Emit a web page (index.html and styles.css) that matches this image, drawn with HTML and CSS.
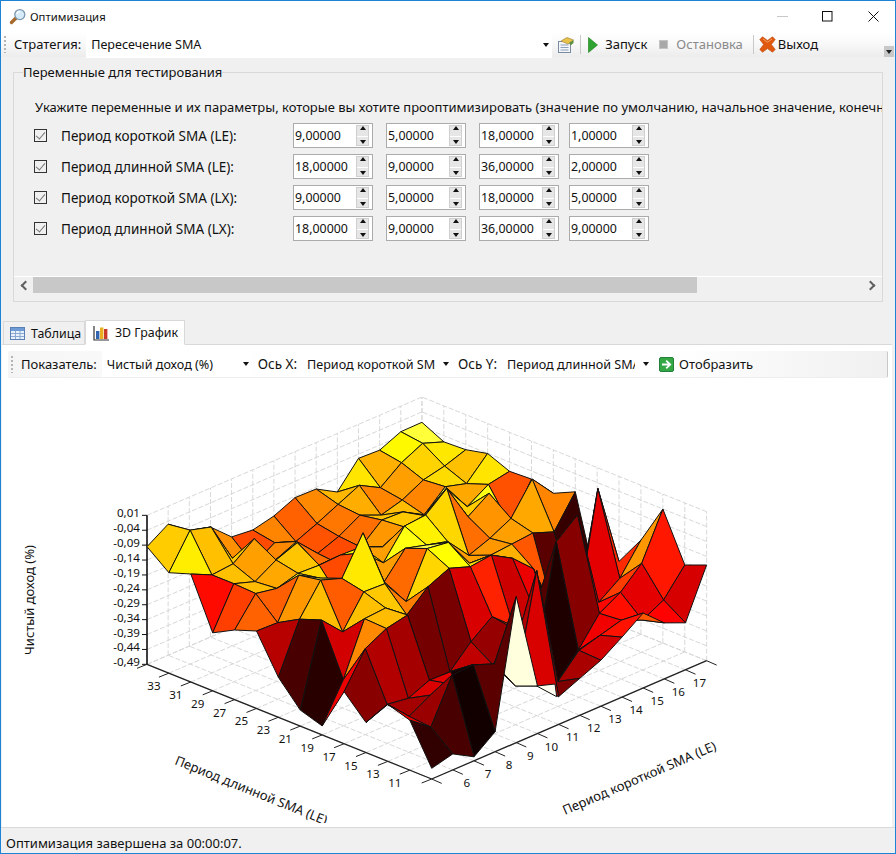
FILE: index.html
```html
<!DOCTYPE html>
<html>
<head>
	<meta charset="utf-8">
	<title>Оптимизация</title>
	<link rel="stylesheet" href="styles.css">
</head>
<body>
<div class="window">
	<div class="titlebar">
		<svg class="app-icon" width="18" height="18" viewBox="0 0 18 18">
			<path d="M7 10 L2.5 14.5" stroke="#a8692c" stroke-width="3.4" stroke-linecap="round"/>
			<circle cx="10.8" cy="6.6" r="5" fill="#d7ecfa" stroke="#7d97ad" stroke-width="1.3"/>
			<path d="M8 6 a3 3 0 0 1 3-2.6" fill="none" stroke="#fff" stroke-width="1.4"/>
		</svg>
		<span class="title">Оптимизация</span>
		<div class="caption-btns">
			<svg width="138" height="30" viewBox="0 0 138 30">
				<path d="M20 14.5h11" stroke="#c8c8c8"/>
				<rect x="65.5" y="9.5" width="9.5" height="9.5" fill="none" stroke="#111"/>
				<path d="M111.5 9.5l10 10M121.5 9.5l-10 10" stroke="#111"/>
			</svg>
		</div>
	</div>

	<div class="toolbar main-bar">
		<span class="grip"></span>
		<span class="tb-label">Стратегия:</span>
		<span class="combo combo-wide"><span class="combo-text">Пересечение SMA</span><i class="drop"></i></span>
		<svg class="tb-icon note-icon" width="18" height="18" viewBox="0 0 18 18">
			<rect x="1.5" y="5.5" width="12" height="11" fill="#f4f6f9" stroke="#7a8ca3"/>
			<path d="M3.5 9h8M3.5 11.5h8M3.5 14h8" stroke="#8ca0b8"/>
			<path d="M4 5 L10 1.5 L16.5 4 L11 8z" fill="#e9c24a" stroke="#a9873a" stroke-width=".7"/>
			<path d="M12 7l4.5-3v3l-3 2.5z" fill="#5d8f3c"/>
		</svg>
		<span class="tb-sep"></span>
		<svg class="tb-icon play-icon" width="12" height="18" viewBox="0 0 12 18">
			<path d="M1.5 1.5 L10.5 9 L1.5 16.5z" fill="#2fa32f" stroke="#1c7a1c" stroke-width=".6"/>
		</svg>
		<span class="tb-label run">Запуск</span>
		<span class="stop-icon"></span>
		<span class="tb-label stop">Остановка</span>
		<span class="tb-sep sep-exit"></span>
		<svg class="tb-icon" width="17" height="17" viewBox="0 0 17 17">
			<path d="M3.5 .8 L8.5 4.4 L13.5 .8 L16.2 3.5 L12.4 8.5 L16.2 13.5 L13.5 16.2 L8.5 12.6 L3.5 16.2 L.8 13.5 L4.6 8.5 L.8 3.5z" fill="#e0590f" stroke="#b8480c" stroke-width=".6"/>
			<path d="M4 3 L8.5 6.2 L13 3" fill="none" stroke="#f6a161"/>
		</svg>
		<span class="tb-label exit">Выход</span>
		<span class="overflow"><i></i></span>
	</div>

	<fieldset class="group">
		<legend>Переменные для тестирования</legend>
		<div class="scroll-view">
			<p class="intro">Укажите переменные и их параметры, которые вы хотите прооптимизировать (значение по умолчанию, начальное значение, конечное значение, шаг).</p>
			<div class="var-row">
				<span class="check"></span>
				<span class="var-name">Период короткой SMA (LE):</span>
				<span class="spin"><b>9,00000</b><i></i></span>
				<span class="spin"><b>5,00000</b><i></i></span>
				<span class="spin"><b>18,00000</b><i></i></span>
				<span class="spin last"><b>1,00000</b><i></i></span>
			</div>
			<div class="var-row">
				<span class="check"></span>
				<span class="var-name">Период длинной SMA (LE):</span>
				<span class="spin"><b>18,00000</b><i></i></span>
				<span class="spin"><b>9,00000</b><i></i></span>
				<span class="spin"><b>36,00000</b><i></i></span>
				<span class="spin last"><b>2,00000</b><i></i></span>
			</div>
			<div class="var-row">
				<span class="check"></span>
				<span class="var-name">Период короткой SMA (LX):</span>
				<span class="spin"><b>9,00000</b><i></i></span>
				<span class="spin"><b>5,00000</b><i></i></span>
				<span class="spin"><b>18,00000</b><i></i></span>
				<span class="spin last"><b>5,00000</b><i></i></span>
			</div>
			<div class="var-row">
				<span class="check"></span>
				<span class="var-name">Период длинной SMA (LX):</span>
				<span class="spin"><b>18,00000</b><i></i></span>
				<span class="spin"><b>9,00000</b><i></i></span>
				<span class="spin"><b>36,00000</b><i></i></span>
				<span class="spin last"><b>9,00000</b><i></i></span>
			</div>
		</div>
		<div class="hscroll">
			<span class="arrow left"></span>
			<span class="thumb"></span>
			<span class="arrow right"></span>
		</div>
	</fieldset>

	<div class="tabs">
		<span class="tab">
			<svg width="15" height="13" viewBox="0 0 15 13">
				<rect x=".5" y=".5" width="14" height="12" fill="#e8f0fa" stroke="#5a80b5"/>
				<rect x="1" y="1" width="13" height="3" fill="#6f9bd4"/>
				<path d="M1 6.5h13M1 9.5h13M5.5 4v8M10 4v8" stroke="#8aa8d0"/>
			</svg>
			Таблица
		</span>
		<span class="tab active">
			<svg width="17" height="16" viewBox="0 0 17 16">
				<path d="M1 1v14h15" fill="none" stroke="#333" stroke-width="1.2"/>
				<rect x="3" y="6" width="3.4" height="8" fill="#3465b0"/>
				<rect x="7" y="2.5" width="3.4" height="11.5" fill="#e8b020"/>
				<rect x="11" y="4" width="3.4" height="10" fill="#c9392a"/>
			</svg>
			3D График
		</span>
	</div>

	<div class="panel">
		<div class="toolbar chart-bar">
			<span class="grip"></span>
			<span class="tb-label">Показатель:</span>
			<span class="combo"><span class="combo-text">Чистый доход (%)</span><i class="drop"></i></span>
			<span class="tb-label axis-label">Ось X:</span>
			<span class="combo"><span class="combo-text">Период короткой SMA (LE)</span><i class="drop"></i></span>
			<span class="tb-label axis-label">Ось Y:</span>
			<span class="combo"><span class="combo-text">Период длинной SMA (LE)</span><i class="drop"></i></span>
			<svg class="go-icon" width="15" height="15" viewBox="0 0 15 15">
				<rect x=".5" y=".5" width="14" height="14" rx="1.5" fill="#35a845" stroke="#23803a"/>
				<path d="M3 7.5h7M7.2 3.6l4 3.9-4 3.9" fill="none" stroke="#fff" stroke-width="1.8"/>
			</svg>
			<span class="tb-label">Отобразить</span>
		</div>
		<svg id="chart" class="chart" width="891" height="445" viewBox="2 378 891 445"></svg>
	</div>

	<div class="statusbar">Оптимизация завершена за 00:00:07.</div>
</div>
<script src="chart.js"></script>
</body>
</html>
```

FILE: styles.css
```css
* { box-sizing: border-box; }
html, body { margin: 0; padding: 0; }
body { font-family: "Noto Sans", "Open Sans", sans-serif; font-size: 13px; color: #111; background: #f0f0f0; }

.window { width: 896px; height: 854px; border: 1px solid #1b84d6; display: flex; flex-direction: column; background: #f0f0f0; overflow: hidden; }

.titlebar { height: 31px; background: #fff; display: flex; align-items: center; padding-left: 8px; flex: none; }
.app-icon { margin-right: 3px; }
.title { font-size: 11.3px; }
.caption-btns { margin-left: auto; height: 30px; }
.caption-btns svg { display: block; }

.toolbar { display: flex; align-items: center; flex: none; }
.main-bar { height: 25px; padding-left: 3px; background: linear-gradient(#fff, #fafafa 40%, #ececec); position: relative; }
.main-bar .tb-label { padding-bottom: 2px; }
.grip { width: 2px; height: 17px; margin-right: 8px; background: repeating-linear-gradient(#b4b4b4 0 2px, transparent 2px 4px); flex: none; }
.tb-label { white-space: nowrap; }
.axis-label { font-size: 13.5px; }
.combo { width: 150px; height: 26px; background: #fff; display: flex; align-items: center; padding-left: 5px; margin: 0 6px 0 5px; font-size: 12.6px; flex: none; position: relative; overflow: hidden; }
.combo-wide { width: 466px; margin-right: 5px; }
.combo-text { white-space: nowrap; overflow: hidden; width: 128px; }
.combo-wide .combo-text { width: 300px; }
.drop { position: absolute; right: 3px; top: 11px; border: 3px solid transparent; border-top: 4px solid #111; border-bottom: 0; }
.tb-icon { flex: none; }
.tb-sep { width: 1px; height: 19px; background: #c9c9c9; margin: 0 6px 0 5px; flex: none; }
.play-icon { margin-right: 6px; }
.stop-icon { width: 9px; height: 9px; background: #a9a9a9; border: 1px solid #c4c4c4; margin: 0 8px 0 12px; flex: none; }
.stop { color: #8a8a8a; }
.sep-exit { margin: 0 5px 0 10px; }
.exit { margin-left: 2px; }
.overflow { position: absolute; right: 1px; bottom: 0; width: 10px; height: 11px; background: #c8c8c8; }
.overflow i { position: absolute; left: 2px; top: 4px; border: 3px solid transparent; border-top: 4px solid #222; border-bottom: 0; }

.group { margin: 6px 12px 0 12px; padding: 0; border: 1px solid #d9d9d9; height: 239px; position: relative; flex: none; min-width: 0; }
.group legend { font-size: 13px; margin-left: 9px; padding: 0; line-height: 18px; }
.scroll-view { height: 195px; overflow: hidden; padding: 16px 0 0 20px; }
.intro { margin: 0 0 3px 1px; font-size: 13px; line-height: 20px; white-space: nowrap; }
.var-row { height: 31px; display: flex; align-items: center; }
.check { width: 13px; height: 13px; border: 1px solid #333; position: relative; margin-right: 14px; flex: none; }
.check:after { content: ""; position: absolute; left: 3px; top: 0; width: 4px; height: 8px; border: solid #777; border-width: 0 1.5px 1.5px 0; transform: rotate(40deg); }
.var-name { width: 232px; font-size: 13.5px; flex: none; white-space: nowrap; }
.spin { width: 80px; height: 25px; margin-right: 13px; background: #fff; border: 1px solid #ababab; padding-left: 1px; display: flex; align-items: center; justify-content: space-between; flex: none; position: relative; }
.spin.last { margin-right: 0; }
.spin:nth-child(5) { margin-right: 10px; }
.spin b { font-weight: normal; font-size: 12.4px; }
.spin i { position: absolute; right: 3px; top: 1px; width: 13px; height: 21px; background: linear-gradient(#e6e6e6 0 10px, #fff 10px 11px, #e6e6e6 11px); border: 1px solid #cfcfcf; }
.spin i:before, .spin i:after { content: ""; position: absolute; left: 3px; border: 3px solid transparent; }
.spin i:before { top: 0; border-bottom: 4px solid #111; border-top: 0; }
.spin i:after { bottom: 1px; border-top: 4px solid #111; border-bottom: 0; }

.hscroll { height: 17px; display: flex; align-items: center; border-top: 1px solid #fff; }
.thumb { width: 664px; height: 16px; background: #c8c8c8; }
.arrow { width: 19px; height: 16px; position: relative; flex: none; }
.arrow:after { content: ""; position: absolute; top: 5px; width: 5px; height: 5px; border: solid #606060; border-width: 2px 0 0 2px; }
.arrow.left:after { left: 8px; transform: rotate(-45deg); }
.arrow.right { margin-left: auto; }
.arrow.right:after { right: 8px; transform: rotate(135deg); }

.tabs { height: 25px; margin-top: 17px; padding-left: 2px; display: flex; align-items: flex-end; flex: none; position: relative; z-index: 1; }
.tab { height: 23px; width: 82px; background: #f0f0f0; border: 1px solid #d9d9d9; border-bottom: 0; display: flex; align-items: center; gap: 6px; padding-left: 6px; font-size: 12.4px; white-space: nowrap; }
.tab.active { height: 25px; width: 100px; background: #fff; border-bottom: 1px solid #fff; margin-bottom: -1px; gap: 5px; padding-left: 7px; }

.panel { flex: none; height: 483px; margin: 0 3px 0 1px; background: #fff; border-top: 1px solid #d9d9d9; }
.chart-bar { height: 27px; margin: 6px 4px 0 6px; padding-left: 3px; background: linear-gradient(90deg, #f5f5f5, #fff 30%, #fff 75%, #f0f0f0); border-right: 1px solid #c8c8c8; border-bottom: 1px solid #eee; border-radius: 2px; }
.go-icon { margin: 0 5px 0 1px; flex: none; }
.chart { display: block; }
.chart text { font-family: "Noto Sans", "Open Sans", sans-serif; font-size: 11.6px; fill: #111; }
.chart text.axis-title { font-size: 13px; }

.statusbar { height: 26px; flex: none; border-top: 1px solid #d9d9d9; padding: 5px 0 0 5px; font-size: 13px; line-height: 20px; }
```

FILE: chart.js
```js
// height above the floor (px) of every grid vertex, [long index][short index]
var H = [
	[10.7,16,4,20,146,47.5,27.7,37,46,60,75,56,47,95.7],
	[50,34,77,78,70,38.7,145,25,47,53,59,50,61,86.9],
	[57,36,48,50,5,51,60,40,6.9,29.5,57,69,88.9,134],
	[30,39,36,45,44.4,42,33,60,18,129,146.5,50,65,94.2],
	[52,86,97,101.4,25.6,26.5,47.4,63.3,45,52,12,25,146,64],
	[9,46,98,99.6,83.5,102.7,112,104.5,107,94.7,75,20,12,30],
	[16,97,76,107,106,79,123,120,90,89,91,93,85,116],
	[40,89,119,111.6,148,90,114.4,108.6,103,80,88,98.8,129,105.7],
	[77.4,76.6,115,103,72,110,91,118.7,120.6,138,100.7,115,73.6,111],
	[69.6,97,93,99,98,99,98,89,100,102,120,92.8,106,110],
	[58,98,91,103.5,111.7,80,72,80,98,97,85,104,98,119],
	[108,98,100,116,85.6,95,74,82,94,85,91,102,106.8,114],
	[100.5,134,128,87.6,72,85,77,86,96,106,94.5,110.4,120.7,113],
	[117.6,131,115.4,110,91,88.8,93.7,103,102.5,90.4,115,114,123.4,123.7]
];
var ZMAX = 149, N = 13;
var svg = document.getElementById('chart');

function P(i, j, h) {
	return [431.7 + 21.15 * j - 21.9 * i, 779 - 9.1 * j - 8.82 * i - (h || 0)];
}
function add(tag, attrs, txt) {
	var e = document.createElementNS('http://www.w3.org/2000/svg', tag);
	for (var k in attrs) e.setAttribute(k, attrs[k]);
	if (txt) e.textContent = txt;
	svg.appendChild(e);
	return e;
}
function line(a, b, cls, w) {
	add('line', { x1: a[0], y1: a[1], x2: b[0], y2: b[1], stroke: cls, 'stroke-width': w || 1 });
}
function dash(a, b) {
	add('line', { x1: a[0], y1: a[1], x2: b[0], y2: b[1], stroke: '#d8d8d8', 'stroke-dasharray': '5 2' });
}
function hot(h) {
	var v = Math.min(1, h / ZMAX);
	var r = Math.min(1, v / 0.375), g = Math.max(0, Math.min(1, (v - 0.375) / 0.375)), b = Math.max(0, (v - 0.75) / 0.25);
	return 'rgb(' + Math.round(r * 255) + ',' + Math.round(g * 255) + ',' + Math.round(b * 240) + ')';
}

// walls and floor
var i, j, t;
for (t = 0; t <= N; t++) {
	dash(P(t, 0), P(t, N));
	dash(P(0, t), P(N, t));
	dash(P(N, t), P(N, t, ZMAX));
	dash(P(t, N), P(t, N, ZMAX));
}
for (t = 0; t <= 10; t++) {
	var z = t * ZMAX / 10;
	dash(P(N, 0, z), P(N, N, z));
	dash(P(0, N, z), P(N, N, z));
}

// axes
line(P(N, 0), P(N, 0, ZMAX), '#111', 1.6);
line(P(N, 0), P(0, 0), '#222', 1.3);
line(P(0, 0), P(0, N), '#222', 1.3);

var zlabels = ['-0,49','-0,44','-0,39','-0,34','-0,29','-0,24','-0,19','-0,14','-0,09','-0,04','0,01'];
var base = P(N, 0);
for (t = 0; t <= 10; t++) {
	var y = base[1] - t * ZMAX / 10;
	line([base[0] - 5, y], [base[0], y], '#111');
	add('text', { x: base[0] - 7, y: y + 2, 'text-anchor': 'end' }, zlabels[t]);
}
for (t = 0; t <= N; t++) {
	var a = P(t, 0);
	line(a, [a[0] - 10, a[1] + 4], '#222');
	if (t > 0 && t < 13) {
		add('text', { x: a[0] - 15, y: a[1] + 17, 'text-anchor': 'middle' }, String(9 + 2 * t));
	}
	var b = P(0, t);
	line(b, [b[0] + 10, b[1] + 4.4], '#222');
	if (t > 0 && t < 13) {
		add('text', { x: b[0] + 14, y: b[1] + 17, 'text-anchor': 'middle' }, String(5 + t));
	}
}
add('text', { transform: 'translate(34 600) rotate(-90)', 'text-anchor': 'middle', 'class': 'axis-title' }, 'Чистый доход (%)');
add('text', { transform: 'translate(174 764) rotate(22)', 'class': 'axis-title' }, 'Период длинной SMA (LE)');
add('text', { transform: 'translate(565 815) rotate(-23.3)', 'class': 'axis-title' }, 'Период короткой SMA (LE)');

// surface, painted from the back corner to the front
for (i = N - 1; i >= 0; i--) {
	for (j = N - 1; j >= 0; j--) {
		var pts = [P(i, j, H[i][j]), P(i + 1, j, H[i + 1][j]), P(i + 1, j + 1, H[i + 1][j + 1]), P(i, j + 1, H[i][j + 1])];
		add('polygon', {
			points: pts.map(function (p) { return p[0].toFixed(1) + ',' + p[1].toFixed(1); }).join(' '),
			fill: hot(H[i][j]),
			stroke: '#111',
			'stroke-width': 1,
			'stroke-linejoin': 'round'
		});
	}
}
// pale scrap showing under the front row
add('polygon', { points: '536.7,686 556.7,696.7 555,684', fill: '#fffdf0', stroke: '#111' });
```
